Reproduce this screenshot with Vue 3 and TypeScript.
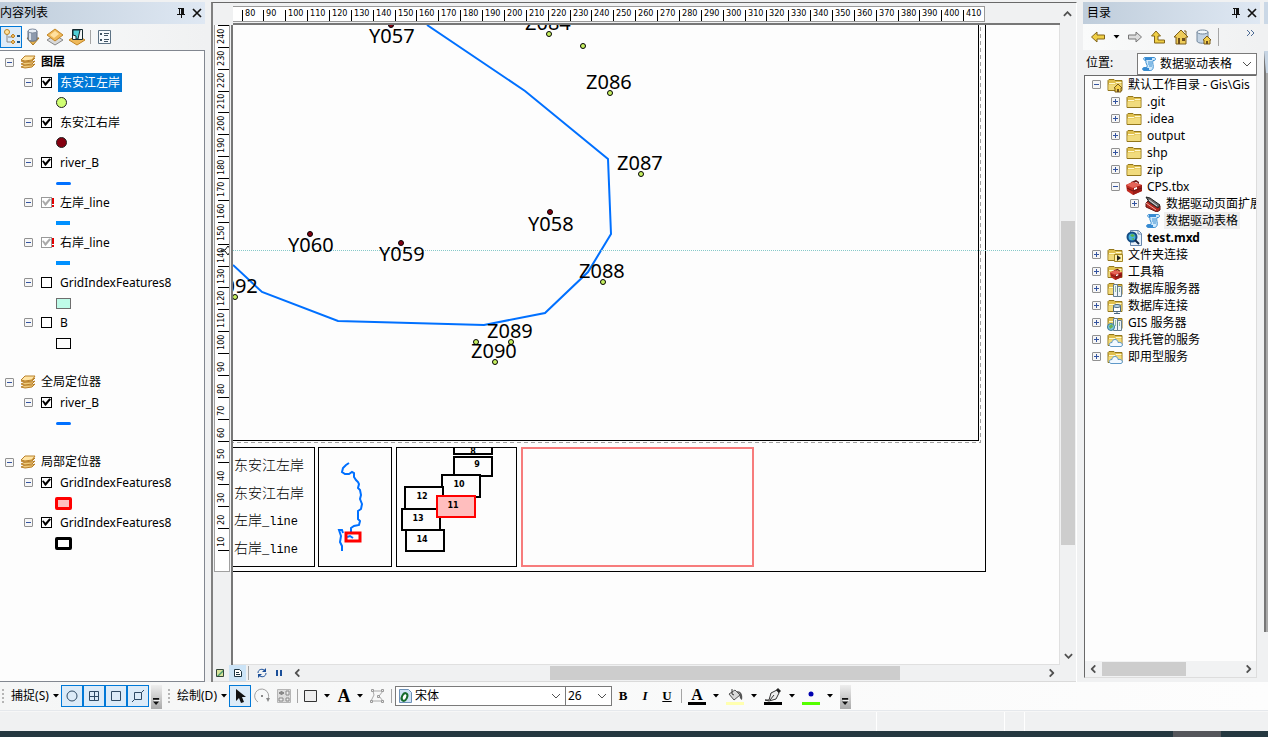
<script setup lang="ts">
import { ref } from 'vue'

interface LayerRow {
  id: string
  kind: 'frame' | 'layer' | 'symbol' | 'blank'
  label?: string
  bold?: boolean
  checked?: boolean
  broken?: boolean
  selected?: boolean
  shape?: 'dot' | 'line' | 'bar' | 'box'
  tone?: string
}

interface CatalogRow {
  label: string
  level: number
  icon: string
  expander?: 'plus' | 'minus'
  bold?: boolean
  selected?: boolean
}

const layers = ref<LayerRow[]>([
  { id: 'f1', kind: 'frame', label: '图层', bold: true },
  { id: 'l1', kind: 'layer', label: '东安江左岸', checked: true, selected: true },
  { id: 's1', kind: 'symbol', shape: 'dot', tone: 'lime' },
  { id: 'l2', kind: 'layer', label: '东安江右岸', checked: true },
  { id: 's2', kind: 'symbol', shape: 'dot', tone: 'maroon' },
  { id: 'l3', kind: 'layer', label: 'river_B', checked: true },
  { id: 's3', kind: 'symbol', shape: 'line' },
  { id: 'l4', kind: 'layer', label: '左岸_line', checked: true, broken: true },
  { id: 's4', kind: 'symbol', shape: 'bar' },
  { id: 'l5', kind: 'layer', label: '右岸_line', checked: true, broken: true },
  { id: 's5', kind: 'symbol', shape: 'bar' },
  { id: 'l6', kind: 'layer', label: 'GridIndexFeatures8', checked: false },
  { id: 's6', kind: 'symbol', shape: 'box', tone: 'mint' },
  { id: 'l7', kind: 'layer', label: 'B', checked: false },
  { id: 's7', kind: 'symbol', shape: 'box', tone: 'plain' },
  { id: 'b1', kind: 'blank' },
  { id: 'f2', kind: 'frame', label: '全局定位器' },
  { id: 'l8', kind: 'layer', label: 'river_B', checked: true },
  { id: 's8', kind: 'symbol', shape: 'line' },
  { id: 'b2', kind: 'blank' },
  { id: 'f3', kind: 'frame', label: '局部定位器' },
  { id: 'l9', kind: 'layer', label: 'GridIndexFeatures8', checked: true },
  { id: 's9', kind: 'symbol', shape: 'box', tone: 'red' },
  { id: 'l10', kind: 'layer', label: 'GridIndexFeatures8', checked: true },
  { id: 's10', kind: 'symbol', shape: 'box', tone: 'black' }
])

const catalog: CatalogRow[] = [
  { label: '默认工作目录 - Gis\\Gis', level: 0, icon: 'folder-home', expander: 'minus' },
  { label: '.git', level: 1, icon: 'folder', expander: 'plus' },
  { label: '.idea', level: 1, icon: 'folder', expander: 'plus' },
  { label: 'output', level: 1, icon: 'folder', expander: 'plus' },
  { label: 'shp', level: 1, icon: 'folder', expander: 'plus' },
  { label: 'zip', level: 1, icon: 'folder', expander: 'plus' },
  { label: 'CPS.tbx', level: 1, icon: 'toolbox', expander: 'minus' },
  { label: '数据驱动页面扩展', level: 2, icon: 'toolset', expander: 'plus' },
  { label: '数据驱动表格', level: 2, icon: 'script', selected: true },
  { label: 'test.mxd', level: 1, icon: 'mxd', bold: true },
  { label: '文件夹连接', level: 0, icon: 'folder-link', expander: 'plus' },
  { label: '工具箱', level: 0, icon: 'folder-tools', expander: 'plus' },
  { label: '数据库服务器', level: 0, icon: 'folder-server', expander: 'plus' },
  { label: '数据库连接', level: 0, icon: 'folder-db', expander: 'plus' },
  { label: 'GIS 服务器', level: 0, icon: 'folder-gis', expander: 'plus' },
  { label: '我托管的服务', level: 0, icon: 'folder-cloud', expander: 'plus' },
  { label: '即用型服务', level: 0, icon: 'folder-cloud', expander: 'plus' }
]

const pitch = 21.87
const topTicks = Array.from({ length: 34 }, (_, i) => ({ at: Math.round(8.5 + i * pitch), value: 80 + i * 10 }))
const sideTicks = Array.from({ length: 25 }, (_, i) => ({ at: Math.round(i * pitch), value: 250 - i * 10 }))

const leftBank = [[549, 34], [583, 46], [610, 93], [641, 174], [603, 282], [235, 297], [476, 342], [511, 342], [495, 362]]
const rightBank = [[391, 25], [550, 212], [310, 234], [401, 243]]
const stations = [
  { t: 'Y057', x: 369, y: 43 }, { t: 'Z084', x: 525, y: 30 }, { t: 'Z086', x: 586, y: 89 },
  { t: 'Z087', x: 617, y: 170 }, { t: 'Y058', x: 528, y: 231 }, { t: 'Y060', x: 288, y: 252 },
  { t: 'Y059', x: 379, y: 261 }, { t: 'Z088', x: 579, y: 278 }, { t: 'Z092', x: 212, y: 293 },
  { t: 'Z089', x: 487, y: 338 }, { t: 'Z090', x: 471, y: 358 }
]
const sheets = [
  { t: '8', x: 454, y: 432, w: 38, h: 22, tx: 473, ty: 454 },
  { t: '9', x: 454, y: 457, w: 38, h: 19, tx: 477, ty: 467 },
  { t: '10', x: 442, y: 475, w: 38, h: 22, tx: 459, ty: 487 },
  { t: '12', x: 405, y: 487, w: 38, h: 22, tx: 422, ty: 499 },
  { t: '13', x: 402, y: 509, w: 38, h: 21, tx: 418, ty: 521 },
  { t: '14', x: 406, y: 530, w: 38, h: 21, tx: 422, ty: 542 },
  { t: '11', x: 437, y: 496, w: 38, h: 21, tx: 453, ty: 508, on: true }
]
const font = ref('宋体')
const size = ref('26')
const place = ref('数据驱动表格')
</script>

<template>
  <div class="app">
    <svg class="defs" aria-hidden="true">
      <symbol id="stack" viewBox="0 0 16 16">
        <g fill="#eec878" stroke="#b98029" stroke-width="1">
          <path d="M1 13l4 1 7-1 3-3-3 1H5z" /><path d="M1 10l4 1 7-1 3-3-3 1H5z" />
          <path d="M1 7l4 1 7-1 3-3-3 1H5z" /><path d="M1 6l4-4 10 0-3 4-7 1z" fill="#ffe4a4" />
        </g>
      </symbol>
      <symbol id="folder" viewBox="0 0 16 16">
        <path d="M1 13.500V3.500l1-1h5l1 1h7v10z" fill="#e0c04e" stroke="#93771c" />
        <path d="M2 6.500h6l1-1h5.500" fill="none" stroke="#fff8d0" />
        <path d="M1.500 12V7.500h7l1-1h5V13h-13z" fill="#f1db7d" />
      </symbol>
      <symbol id="house" viewBox="0 0 16 16">
        <path d="M8 1L1 8h2v7h10V8h2z" fill="#edcb58" stroke="#7a5c1b" />
        <path d="M11 2h2v4" fill="none" stroke="#7a5c1b" /><path d="M5 9h2v6H5zM9 9h3v3H9z" fill="#6c4d1c" />
      </symbol>
      <symbol id="house-small" viewBox="0 0 10 10">
        <path d="M5 1L1 5h1v4h6V5h1z" fill="#f3cf4e" stroke="#7a5c1b" /><path d="M4 6h2v3H4z" fill="#6c4d1c" />
      </symbol>
      <symbol id="folder-home" viewBox="0 0 16 16"><use href="#folder" width="16" height="16" /><use href="#house-small" x="6" y="6" width="10" height="10" /></symbol>
      <symbol id="toolbox" viewBox="0 0 16 16">
        <path d="M5 3l5-2 3 2v3l-1-2-2-1-4 2z" fill="#6c1512" /><path d="M0 6l6-3 10 3v6l-9 4-6-4z" fill="#c02a20" />
        <path d="M0 6l7 3 9-3-9-3z" fill="#e56458" /><path d="M7 9v7l9-4V6z" fill="#9d1c16" /><path d="M8 9l3-1v2l-3 1z" fill="#fff" /><path d="M1 9l6 3 9-3" stroke="#6c1512" fill="none" />
      </symbol>
      <symbol id="toolset" viewBox="0 0 16 16">
        <path d="M1 7l3-3 11 6v4l-3 2L1 11z" fill="#b42a20" stroke="#5d1713" /><path d="M1 1l4 1 10 7-2 3-9-6z" fill="#6b6b6b" stroke="#222" /><path d="M4 4l8 6" stroke="#e0e0e0" stroke-width="1" /><path d="M1 7l10 7" stroke="#f3a89f" />
      </symbol>
      <symbol id="script" viewBox="0 0 16 16">
        <path d="M4 1.500h9c2 0 2 3 0 3h-1c-1 3 1 5 0 8-1 2-2 2-3 2H3c-2 0-2-3 0-3h3c1-3-2-4-1-7-3 0-3-3-1-3z" fill="#cfe9fc" stroke="#3d8fd0" />
        <path d="M4 2h7v2H4z" fill="#3489d4" /><path d="M7 6h4M7 8h4M8 10h3" stroke="#3d8fd0" /><path d="M2 12h6v2H2z" fill="#3489d4" />
      </symbol>
      <symbol id="mxd" viewBox="0 0 16 16">
        <path d="M4.500.500h8l3 3v12h-11z" fill="#e9f1fa" stroke="#6686ad" /><path d="M12 1v3h3" fill="#fff" stroke="#6686ad" />
        <circle cx="6" cy="7" r="4.500" fill="#45b0de" stroke="#154d85" stroke-width="2" /><path d="M4 5l3-1 2 2-3 1zM5 9l3-1v2z" fill="#5fb443" /><path d="M9 10l4 4" stroke="#10294b" stroke-width="2" />
      </symbol>
      <symbol id="folder-link" viewBox="0 0 16 16"><use href="#folder" width="16" height="16" /><path d="M7.500 7.500h8v7h-8z" fill="#fff0a8" stroke="#a38524" /><path d="M10 8l4 3-4 3z" fill="#222" /></symbol>
      <symbol id="folder-tools" viewBox="0 0 16 16"><use href="#folder" width="16" height="16" /><use href="#toolbox" x="3" y="4" width="12" height="12" /></symbol>
      <symbol id="folder-server" viewBox="0 0 16 16"><use href="#folder" width="16" height="16" /><path d="M6.500 3.500h4v12h-4zM10.500 5.500h4v10h-4z" fill="#eef5fa" stroke="#637d91" /><path d="M8 6h1M8 8h1M8 10h1M12 8h1M12 10h1" stroke="#3c8c48" /></symbol>
      <symbol id="folder-db" viewBox="0 0 16 16"><use href="#folder" width="16" height="16" /><path d="M6.500 7.500h7v6h-7z" fill="#fff" stroke="#49677e" /><path d="M10 14v2M7 15.500h6" stroke="#49677e" /><ellipse cx="10" cy="8" rx="3.500" ry="1.500" fill="#bcd8eb" stroke="#49677e" /></symbol>
      <symbol id="folder-gis" viewBox="0 0 16 16"><use href="#folder-server" width="16" height="16" /><circle cx="4" cy="12" r="3.500" fill="#79c6e4" stroke="#3c7b98" /><path d="M2 11l3-2 1 3-3 2z" fill="#69b150" /></symbol>
      <symbol id="folder-cloud" viewBox="0 0 16 16"><use href="#folder" width="16" height="16" /><path d="M4 14.500c-3-1-2-4 1-4 0-4 6-4 6 0 4-1 6 3 3 4z" fill="#f2f9ff" stroke="#5e98c8" /></symbol>
      <symbol id="arrow" viewBox="0 0 16 16"><path d="M1.500 8L7 3v3h7.500v4H7v3z" stroke-linejoin="round" /></symbol>
      <symbol id="caret" viewBox="0 0 6 4"><path d="M0 0h6L3 3.500z" /></symbol>
      <symbol id="chevron" viewBox="0 0 10 6"><path d="M1 1l4 4 4-4" fill="none" stroke="#505050" /></symbol>
      <symbol id="more" viewBox="0 0 8 10"><path d="M0 1h7v2H0zM0 5h7L3.500 9z" fill="#111" /><path d="M1 4h7" stroke="#fff" /></symbol>
      <symbol id="pin" viewBox="0 0 10 10"><path d="M2 0h6v6h1v1H6v3H5V7H1V6h2V1H2zM4 1v5h1V1z" fill="#111" fill-rule="evenodd" /></symbol>
      <symbol id="close" viewBox="0 0 10 10"><path d="M1 1l8 8M9 1L1 9" stroke="#111" stroke-width="1.700" /></symbol>
    </svg>

    <main class="workspace">
      <section class="panel contents">
        <header class="title"><h2>内容列表</h2>
          <button aria-label="自动隐藏"><svg><use href="#pin" /></svg></button>
          <button aria-label="关闭"><svg><use href="#close" /></svg></button>
        </header>
        <nav class="tools">
          <button class="tool active" aria-label="按绘制顺序列出">
            <svg viewBox="0 0 18 18"><path d="M5 6v8h5M6 9h5" fill="none" stroke="#888" /><circle cx="5" cy="4" r="2.500" fill="#ffe3a0" stroke="#bd8425" /><path d="M9 8l2-2 2 2-2 2zM9 14l2-2 2 2-2 2z" fill="#e8b560" stroke="#bd8425" /><path d="M15 8h3M15 14h3" stroke="#16538a" stroke-width="2" /></svg>
          </button>
          <button class="tool" aria-label="按源列出">
            <svg viewBox="0 0 18 18"><path d="M3 10h12l-6 7z" fill="#e9b44f" stroke="#a77723" /><path d="M4 3v8c0 3 9 3 9 0V3z" fill="#8d9aad" stroke="#606d80" /><path d="M6 4v8" stroke="#d8dfe8" stroke-width="2" /><ellipse cx="8.500" cy="3" rx="4.500" ry="2" fill="#e7edf4" stroke="#7c899c" /></svg>
          </button>
          <button class="tool" aria-label="按可见性列出">
            <svg viewBox="0 0 18 18"><path d="M1 12l8-5 8 5-8 5z" fill="#d9d9d9" stroke="#888" /><path d="M1 7l8-6 8 6-8 6z" fill="#efb95a" stroke="#c18526" /><path d="M4 7l5-4 4 3-5 4z" fill="#ffe1a0" /></svg>
          </button>
          <button class="tool" aria-label="按选择列出">
            <svg viewBox="0 0 18 18"><path d="M1 12l8-5 8 5-8 5z" fill="#efb95a" stroke="#c18526" /><path d="M4.500 1.500h10v10h-10z" fill="#f4f6f6" stroke="#14292e" /><path d="M5 2h7l-2 9H8V8L5 7z" fill="#4fd0d8" stroke="#14292e" /></svg>
          </button>
          <i class="rule"></i>
          <button class="tool" aria-label="选项">
            <svg viewBox="0 0 18 18"><path d="M3.500 2.500h12v13h-12z" fill="#f6f9fc" stroke="#5d7284" /><path d="M9 5.500h5M9 7.500h4M9 11.500h5M9 13.500h4" stroke="#3e5263" /><path d="M5 5h2v2H5zM5 11h2v2H5z" fill="#3e5263" /></svg>
          </button>
        </nav>
        <ul class="tree layer-tree">
          <li v-for="row in layers" :key="row.id" :class="['row', row.kind]">
            <template v-if="row.kind === 'frame'">
              <button class="expander" aria-label="折叠"></button>
              <svg class="icon"><use href="#stack" /></svg>
              <span :class="['frame-name', { bold: row.bold }]">{{ row.label }}</span>
            </template>
            <template v-else-if="row.kind === 'layer'">
              <button class="expander" aria-label="折叠"></button>
              <input :id="row.id" v-model="row.checked" type="checkbox" :class="{ broken: row.broken }" />
              <i :class="['alert', { shown: row.broken }]"></i>
              <label :for="row.id" :class="{ selected: row.selected }">{{ row.label }}</label>
            </template>
            <span v-else-if="row.kind === 'symbol'" :class="['mark', row.shape, row.tone]"></span>
          </li>
        </ul>
      </section>

      <section class="view">
        <div class="corner"></div>
        <div class="top-ruler">
          <svg>
            <template v-for="t in topTicks" :key="t.value">
              <rect class="tick" :x="t.at" y="3" width="1" height="11" />
              <text :x="t.at + 3" y="9">{{ t.value }}</text>
            </template>
          </svg>
        </div>
        <button class="scroll-end up" aria-label="向上"><svg><use href="#chevron" /></svg></button>
        <div class="side-ruler">
          <div class="side-scale">
            <svg>
              <template v-for="t in sideTicks" :key="t.value">
                <rect class="tick" x="3" :y="t.at" width="11" height="1" />
                <text v-if="t.value < 250" :transform="`translate(9 ${t.at - 3}) rotate(-90)`">{{ t.value }}</text>
              </template>
              <path d="M6 225h4l3-4 3 4-3 5-3-4H6z" fill="#fff" stroke="#111" />
            </svg>
          </div>
        </div>
        <div class="map">
          <svg>
            <g transform="translate(-233 -25)" shape-rendering="crispEdges">
              <g fill="none" stroke="#000">
                <path d="M230 440.500h748.500V20" /><path d="M230 571.500h755.500V20" />
                <path d="M230 442.500h750.500V20" stroke="#a0a0a0" stroke-dasharray="4 3" />
                <path d="M230 447.500h84.500v119h-84.500M318.500 447.500h73v119h-73zM396.500 447.500h120v119h-120z" />
              </g>
              <rect x="522" y="448" width="231" height="118" fill="none" stroke="#f77c7c" stroke-width="2" />
            </g>
            <g transform="translate(-233 -25)">
              <polyline class="river" points="233,265 262,292 338,321 484,325 545,313 588,272 611,234 608,159 525,91 427,25" />
              <circle v-for="p in leftBank" :key="p.join()" class="pt left" :cx="p[0]" :cy="p[1]" r="2.500" />
              <circle v-for="p in rightBank" :key="p.join()" class="pt right" :cx="p[0]" :cy="p[1]" r="2.500" />
              <path d="M233 250.500H1062" stroke="#86c9c9" stroke-dasharray="1 1" shape-rendering="crispEdges" />
              <text v-for="s in stations" :key="s.t" class="station" :x="s.x" :y="s.y">{{ s.t }}</text>
              <g class="legend">
                <text x="234" y="470">东安江左岸</text><text x="234" y="498">东安江右岸</text>
                <text x="234" y="525">左岸<tspan>_line</tspan></text><text x="234" y="553">右岸<tspan>_line</tspan></text>
              </g>
              <polyline class="river" points="349,463 346,465 343,468 342,472 345,474 349,474 352,472 354,473 354,477 356,480 358,482 359,484 358,488 360,490 361,495 360,499 362,504 361,509 358,511 358,519 360,521 359,525 354,526 351,528 351,532" />
              <polyline class="river" points="343,533 342,530 339,530 340,533 341,536 340,542 342,546 342,551" />
              <path class="river" d="M347 537l3-1 3 2" />
              <rect x="346" y="533" width="14" height="8" fill="none" stroke="red" stroke-width="3" />
              <svg x="397" y="448" width="119" height="118" viewBox="397 448 119 118">
                <g v-for="s in sheets" :key="s.t" :class="['sheet', { on: s.on }]">
                  <rect :x="s.x" :y="s.y" :width="s.w" :height="s.h" /><text :x="s.tx" :y="s.ty">{{ s.t }}</text>
                </g>
              </svg>
            </g>
          </svg>
        </div>
        <div class="vscroll"><i></i><button class="scroll-end down" aria-label="向下"><svg><use href="#chevron" /></svg></button></div>
        <footer class="view-bar">
          <button aria-label="数据视图"><svg viewBox="0 0 10 10"><path d="M1.500 1.500h7v7h-7z" fill="#d7e39a" stroke="#344638" /><path d="M2 8l6-6v2L4 8z" fill="#4a9a6d" /></svg></button>
          <button class="on" aria-label="布局视图"><svg viewBox="0 0 10 10"><path d="M1.500 1.500h5l2 2v5h-7z" fill="#fff" stroke="#1c3340" /><path d="M3 4.500h3M3 6.500h4" stroke="#1c3340" /></svg></button>
          <i class="rule"></i>
          <button aria-label="刷新"><svg viewBox="0 0 10 10"><path d="M1 5c0-4 5-5 7-2M9 5c0 4-5 5-7 2" fill="none" stroke="#1b4f99" /><path d="M9 0v4H5zM1 10V6h4z" fill="#1b4f99" /></svg></button>
          <button class="pause" aria-label="暂停"><svg viewBox="0 0 10 10"><path d="M2 2h2v6H2zM6 2h2v6H6z" fill="#1b4f99" /></svg></button>
          <button class="scroll-end prev" aria-label="向左"><svg><use href="#chevron" /></svg></button>
          <span class="track"><i></i></span>
          <button class="scroll-end next" aria-label="向右"><svg><use href="#chevron" /></svg></button>
        </footer>
      </section>

      <section class="panel catalog">
        <header class="title"><h2>目录</h2>
          <button aria-label="自动隐藏"><svg><use href="#pin" /></svg></button>
          <button aria-label="关闭"><svg><use href="#close" /></svg></button>
        </header>
        <nav class="tools">
          <button class="gold" aria-label="后退"><svg><use href="#arrow" /></svg></button>
          <svg class="caret"><use href="#caret" /></svg>
          <button class="gray" aria-label="前进"><svg class="flip"><use href="#arrow" /></svg></button>
          <button class="gold" aria-label="上一级"><svg viewBox="0 0 16 16"><path d="M1.500 7L6 2l4.500 5H8v4h6.500v3H4.500V7z" /></svg></button>
          <button aria-label="主目录"><svg><use href="#house" /></svg></button>
          <button aria-label="默认地理数据库"><svg viewBox="0 0 16 16"><path d="M1 3v9c0 3 11 3 11 0V3z" fill="#c3d3e3" stroke="#72879c" /><ellipse cx="6.500" cy="3" rx="5.500" ry="2" fill="#f2f7fb" stroke="#72879c" /><use href="#house-small" x="6" y="6" width="10" height="10" /></svg></button>
          <i class="rule"></i>
          <button class="extra" aria-label="更多"><svg viewBox="0 0 10 8"><path d="M1 1l3 3-3 3M5 1l3 3-3 3" fill="none" stroke="#4d6b95" /></svg></button>
        </nav>
        <div class="location">
          <label for="place">位置:</label>
          <span class="combo"><svg class="icon"><use href="#script" /></svg>
            <select id="place" v-model="place"><option>数据驱动表格</option></select><svg class="chev"><use href="#chevron" /></svg></span>
        </div>
        <div class="tree catalog-tree">
          <ul>
            <li v-for="row in catalog" :key="row.label" :class="['item', 'level' + row.level]">
              <button v-if="row.expander" :class="['expander', row.expander]" aria-label="展开或折叠"></button>
              <i v-else class="no-expander"></i>
              <svg class="icon"><use :href="'#' + row.icon" /></svg>
              <span :class="{ bold: row.bold, picked: row.selected }">{{ row.label }}</span>
            </li>
          </ul>
          <div class="hscroll">
            <button class="scroll-end prev" aria-label="向左"><svg><use href="#chevron" /></svg></button>
            <span class="track"><i></i></span>
            <button class="scroll-end next" aria-label="向右"><svg><use href="#chevron" /></svg></button>
          </div>
        </div>
      </section>
      <aside class="dock"><i class="dock-title"></i><i class="dock-body"></i></aside>
    </main>

    <div class="toolbar">
      <i class="grip"></i>
      <button class="menu snap">捕捉(S)<svg class="caret"><use href="#caret" /></svg></button>
      <div class="snaps">
        <button aria-label="点捕捉"><svg viewBox="0 0 14 14"><circle cx="7" cy="7" r="5" /></svg></button>
        <button aria-label="端点捕捉"><svg viewBox="0 0 14 14"><path d="M2.500 2.500h9v9h-9zM7.500 3v8M3 7.500h8" /></svg></button>
        <button aria-label="折点捕捉"><svg viewBox="0 0 14 14"><path d="M2.500 2.500h9v9h-9z" /></svg></button>
        <button aria-label="边捕捉"><svg viewBox="0 0 14 14"><path d="M3.500 3.500h7v7h-7zM1 13l2.500-2.500M10.500 3.500L13 1" /></svg></button>
      </div>
      <button class="overflow" aria-label="工具条选项"><svg><use href="#more" /></svg></button>
      <i class="grip"></i>
      <button class="menu draw">绘制(D)<svg class="caret"><use href="#caret" /></svg></button>
      <button class="cell active" aria-label="选择元素"><svg viewBox="0 0 16 16"><path d="M4 1v12l3-3 2 5 3-1-2-5h4z" fill="#111" /></svg></button>
      <button class="cell" aria-label="旋转"><svg viewBox="0 0 16 16"><path d="M4 14A7 7 0 1 1 14 11" fill="none" stroke="#a0a0a0" /><path d="M7 7h2v2H7zM12 10h4l-2 4z" fill="#888" /></svg></button>
      <button class="cell" aria-label="缩放至元素"><svg viewBox="0 0 16 16"><path d="M1.500 1.500h13v13h-13z" fill="#ddd" stroke="#b5b5b5" /><path d="M3 5h5M5.500 3v4" stroke="#888" stroke-width="2" /><path d="M10 3h3v4h-3zM3 10h4v3H3zM10 10h3v3h-3z" fill="#eee" stroke="#888" /></svg></button>
      <i class="rule first"></i>
      <button class="cell" aria-label="矩形"><svg viewBox="0 0 16 16"><path d="M1.500 2.500h12v11h-12z" fill="#eee" stroke="#333" /></svg></button>
      <svg class="caret"><use href="#caret" /></svg>
      <button class="cell glyph big" aria-label="文本">A</button>
      <svg class="caret"><use href="#caret" /></svg>
      <button class="cell" aria-label="编辑折点"><svg viewBox="0 0 16 16"><path d="M2 13l3-6-1-4h10l-4 5 4 5z" fill="none" stroke="#aaa" /><path d="M2.500 1.500h2v2h-2zM12.500 1.500h2v2h-2zM8.500 7.500h2v2h-2zM1.500 12.500h2v2h-2zM12.500 12.500h2v2h-2z" fill="#eee" stroke="#999" /></svg></button>
      <i class="rule"></i>
      <span class="combo font"><svg class="icon" viewBox="0 0 16 16"><path d="M2.500 1.500h9l3 3v10h-12z" fill="#cfe2f5" stroke="#6c91b7" /><ellipse cx="7.500" cy="9" rx="2.500" ry="4" transform="rotate(25 7.500 9)" fill="#fff" stroke="#176b2c" stroke-width="2" /></svg>
        <select v-model="font" aria-label="字体"><option>宋体</option></select><svg class="chev"><use href="#chevron" /></svg></span>
      <span class="combo size"><select v-model="size" aria-label="字号"><option>26</option></select><svg class="chev"><use href="#chevron" /></svg></span>
      <div class="styles">
        <button class="cell glyph" aria-label="加粗">B</button>
        <button class="cell glyph italic" aria-label="倾斜">I</button>
        <button class="cell glyph underline" aria-label="下划线">U</button>
      </div>
      <i class="rule"></i>
      <div class="swatches">
        <button class="ink black glyph" aria-label="字体颜色">A</button><svg class="caret"><use href="#caret" /></svg>
        <button class="ink cream" aria-label="填充颜色"><svg viewBox="0 0 16 14"><path d="M2 6l6-4 5 5-6 5z" fill="#d9d9d9" stroke="#555" /><path d="M5 1v5l2 1" fill="none" stroke="#333" /><path d="M9 3c5 0 7 3 6 9-2-1-3-3-2-6z" fill="#555" /></svg></button><svg class="caret"><use href="#caret" /></svg>
        <button class="ink black" aria-label="线颜色"><svg viewBox="0 0 16 14"><path d="M0 12h4l2-7 6-3 2 3-3 6-7 2zM5 12l4-5" fill="#eee" stroke="#333" /><path d="M11 2l2-2 3 3-2 2z" fill="#222" /></svg></button><svg class="caret"><use href="#caret" /></svg>
        <button class="ink green" aria-label="标记颜色"><svg viewBox="0 0 16 14"><circle cx="8" cy="6" r="2.500" fill="#0000b0" /></svg></button><svg class="caret"><use href="#caret" /></svg>
      </div>
      <button class="overflow last" aria-label="工具条选项"><svg><use href="#more" /></svg></button>
    </div>
    <footer class="status"><i></i><i></i><i></i></footer>
    <div class="taskbar"><i></i></div>
  </div>
</template>

<style>
html, body { margin: 0; height: 100%; }
</style>

<style scoped>
.app { display: flex; flex-direction: column; height: 100vh; min-height: 600px; overflow: hidden; background: #f0f1f2; color: #000; font: 12px/16px "Noto Sans", "Noto Sans CJK SC", sans-serif; }
.app * { box-sizing: border-box; }
.defs { position: absolute; width: 0; height: 0; }
svg { display: block; flex: none; }
button { display: flex; align-items: center; justify-content: center; padding: 0; border: 0; background: none; color: inherit; font: inherit; }
ul { margin: 0; padding: 0; list-style: none; }
.workspace { flex: 1; min-height: 0; display: flex; padding-top: 2px; }
.panel { display: flex; flex-direction: column; flex: none; min-height: 0; }
.contents { width: 205px; margin-right: 6px; }
.title { display: flex; align-items: center; height: 22px; flex: none; background: linear-gradient(90deg, #bfcddb, #dfe8f3); }
.title h2 { flex: 1; margin: 0; font-size: 12px; line-height: 22px; font-weight: 400; }
.title button { width: 16px; height: 16px; }
.title svg { width: 10px; height: 10px; }
.tools { display: flex; align-items: center; height: 26px; flex: none; background: linear-gradient(90deg, #fafbfb, #f0f1f2); }
.tool { width: 22px; height: 22px; border: 1px solid transparent; }
.tool svg { width: 18px; height: 18px; }
.active { border: 1px solid #0078d7; background: #dcebf8; }
.rule { width: 1px; height: 14px; flex: none; background: #a5a5a5; }
.contents .rule { margin: 0 2px 0 2px; }
.tree { flex: 1; min-height: 0; overflow: hidden; background: #fdfdfd; border: 1px solid #828790; }
.layer-tree { border-left: 0; padding-top: 1px; }
.row { display: flex; align-items: center; height: 20px; padding-left: 5px; white-space: nowrap; }
.layer { padding-left: 24px; }
.symbol { padding-left: 56px; }
.expander { position: relative; width: 9px; height: 9px; flex: none; border: 1px solid #919191; border-radius: 1px; background: #f6f6f6; }
.expander::before { content: ""; width: 5px; height: 1px; background: #3454a0; }
.expander.plus::after { content: ""; position: absolute; left: 3px; top: 1px; width: 1px; height: 5px; background: #3454a0; }
.icon { width: 16px; height: 16px; }
.frame .icon { margin: 0 5px 0 6px; }
.bold { font-weight: 700; }
input { appearance: none; display: grid; place-items: center; width: 11px; height: 11px; flex: none; margin: 0 0 0 8px; border: 1px solid #000; background: #fff; }
input:checked::before { content: ""; width: 9px; height: 8px; background: #000; clip-path: polygon(0 38%, 18% 32%, 38% 58%, 82% 4%, 100% 18%, 40% 100%, 30% 90%); }
.broken { border-color: #999; }
input.broken:checked::before { background: #aaa; }
.alert { width: 2px; height: 9px; margin-right: 4px; }
.alert.shown { background: linear-gradient(#e00000 70%, #fff 70%, #fff 80%, #e00000 80%); }
.row label { padding: 0 2px; line-height: 19px; }
.row label.selected { background: #0078d7; color: #fff; }
.mark { display: block; }
.dot { width: 11px; height: 11px; border: 1px solid #222; border-radius: 50%; }
.lime { background: #d1ff73; }
.maroon { background: #850010; }
.line { width: 15px; height: 3px; margin-top: 3px; border-radius: 2px; background: #0070ff; }
.bar { width: 14px; height: 4px; margin-top: 2px; background: #0090ff; }
.box { width: 15px; height: 11px; margin-top: 2px; border: 1px solid #000; }
.mint { border-color: #6e6e6e; background: #befbe8; }
.red, .box.black { width: 17px; height: 13px; margin-left: -1px; border: 3px solid #f00; border-radius: 2px; background: #ffbebe; }
.box.black { border-color: #000; background: #fff; }

.view { flex: 1; min-width: 0; display: grid; grid-template: 22px 1fr 17px / 20px 1fr 16px; border-left: 2px solid #808080; border-top: 1px solid #696969; border-right: 1px solid #fff; margin-right: 6px; }
.top-ruler { overflow: hidden; padding-top: 3px; border-bottom: 2px solid #777; }
.top-ruler svg { width: 752px; max-width: 100%; height: 16px; border: 1px solid #9a9a9a; border-left: 0; background: #fff; }
.tick { fill: #000; }
.top-ruler text, .side-ruler text { font: 9px "DejaVu Sans Condensed", "DejaVu Sans", sans-serif; }
.side-ruler { overflow: hidden; border-right: 2px solid #777; }
.side-scale { width: 16px; height: 547px; margin-left: 1px; border: 1px solid #a0a0a0; border-top: 0; background: #fff; overflow: hidden; }
.side-scale svg { width: 16px; height: 100%; }
.map { min-width: 0; min-height: 0; overflow: hidden; background: #fdfdfd; border-right: 1px solid #e0e0e0; border-bottom: 1px solid #e0e0e0; }
.map > svg { width: 100%; height: 100%; }
.river { fill: none; stroke: #0070ff; stroke-width: 2; }
.pt { stroke: #000; }
.pt.left { fill: #c6f060; }
.pt.right { fill: #850010; }
.station { font-size: 20px; }
.legend { font: 14px "Noto Sans CJK SC", sans-serif; font-weight: 300; }
.legend tspan { font: 12px "Liberation Mono", monospace; }
.sheet rect { fill: #fdfdfd; stroke: #000; stroke-width: 2; }
.sheet.on rect { fill: #ffbebe; stroke: #f00; }
.sheet text { font: bold 8px "DejaVu Sans", sans-serif; text-anchor: middle; }
.scroll-end { width: 14px; height: 14px; flex: none; stroke-width: 2; }
.scroll-end svg { width: 9px; height: 6px; overflow: visible; }
.up { align-self: center; }
.up svg { transform: rotate(180deg); }
.prev svg { transform: rotate(90deg); }
.next svg { transform: rotate(-90deg); }
.vscroll { display: flex; flex-direction: column; min-height: 0; padding-left: 1px; }
.vscroll::before { content: ""; flex: 196; }
.vscroll i { flex: 324; background: #cdcdcd; width: 14px; }
.vscroll .down { margin-top: 104px; margin-bottom: 2px; }
.view-bar { grid-column: 1 / -1; display: flex; align-items: center; border-bottom: 1px solid #dadada; }
.view-bar button { width: 14px; height: 16px; flex: none; }
.view-bar button > svg { width: 10px; height: 10px; }
.view-bar .on { width: 17px; margin-left: 2px; background: #cce4f7; }
.view-bar .rule { margin: 0 6px 0 2px; }
.view-bar .pause { margin-left: 3px; }
.view-bar .scroll-end svg { width: 9px; height: 6px; }
.view-bar .prev { margin-left: 4px; }
.track { flex: 1; height: 14px; display: flex; }
.track::before { content: ""; flex: 246; }
.track i { flex: 350; background: #cdcdcd; }
.track::after { content: ""; flex: 144; }
.view-bar .next { margin-right: 18px; }

.catalog { width: 177px; }
.catalog .title { padding-left: 4px; }
.catalog .tools { padding-left: 7px; }
.catalog .tools svg { width: 16px; height: 16px; }
.catalog .tools button { margin-right: 7px; }
.catalog .tools .caret { width: 7px; height: 4px; margin: 0 7px 0 0; }
.gold svg { fill: #f0cf45; stroke: #826419; }
.gray svg { fill: #ddd; stroke: #777; }
.flip { transform: scaleX(-1); }
.catalog .rule { height: 18px; margin-left: -1px; }
.catalog .tools .extra { margin: 0 4px 8px auto; }
.catalog .tools .extra svg { width: 10px; height: 8px; }
.location { display: flex; align-items: center; justify-content: space-between; height: 25px; padding: 0 3px; flex: none; }
.combo { display: flex; align-items: center; height: 22px; padding: 0 4px 0 3px; border: 1px solid #7a7a7a; background: #fff; }
.combo select { appearance: none; flex: 1; min-width: 0; height: 18px; padding: 0 0 0 3px; border: 0; outline: 0; background: none; color: #000; font: inherit; }
.chev { width: 10px; height: 6px; }
.location .combo { width: 120px; margin-top: 2px; }
.catalog-tree { display: flex; flex-direction: column; margin: 0 3px 4px 1px; border-color: #696969 #ddd #ddd #696969; }
.catalog-tree ul { flex: 1; min-height: 0; overflow: hidden; }
.item { display: flex; align-items: center; height: 17px; padding-left: 7px; white-space: nowrap; }
.item.level1 { padding-left: 26px; }
.item.level2 { padding-left: 45px; }
.item .icon { margin: 0 3px 0 6px; }
.item span { padding: 0 2px; line-height: 17px; }
.no-expander { width: 9px; flex: none; }
.picked { background: #efefef; }
.hscroll { display: flex; align-items: center; height: 16px; flex: none; background: #f1f2f3; padding: 0 1px; }
.hscroll .track::before { content: none; }
.hscroll .track i { flex: 83; margin-left: 2px; }
.hscroll .track::after { flex: 54; }
.dock { display: flex; flex-direction: column; width: 4px; margin-left: 4px; flex: none; }
.dock-title { height: 22px; background: #cbd8e6; }
.dock-body { flex: 1; margin: 27px 0 50px; border-left: 2px solid #777; border-top: 22px solid #c7d5e4; background: #a9a9a9; }

.toolbar { display: flex; align-items: center; height: 29px; flex: none; background: linear-gradient(90deg, #f5f6f6, #fdfdfd); border-bottom: 1px solid #e5e8ec; white-space: nowrap; }
.grip { width: 2px; height: 14px; flex: none; margin: 0 7px 0 2px; background: repeating-linear-gradient(#b5b5b5 0 2px, transparent 2px 4px); }
.menu { gap: 4px; flex: none; }
.caret { width: 6px; height: 4px; }
.snap { width: 50px; padding-right: 2px; }
.snaps { display: flex; }
.snaps button { width: 22px; height: 22px; border: 1px solid #0078d7; background: #dcebf8; }
.snaps svg { width: 14px; height: 14px; fill: none; stroke: #2f4a64; }
.overflow { align-self: end; align-items: end; width: 11px; height: 24px; flex: none; margin: 0 4px 1px 2px; padding-bottom: 3px; background: linear-gradient(#eee, #aaa); }
.overflow.last { margin-left: 0; }
.overflow svg { width: 7px; height: 9px; }
.draw { width: 52px; padding-right: 2px; }
.cell { width: 22px; height: 22px; flex: none; }
.cell svg { width: 16px; height: 16px; }
.toolbar > .rule { margin: 0 3px; }
.toolbar > .rule.first { margin: 0 2px; }
.toolbar > .caret { margin: 0 3px 0 2px; }
.glyph { font: bold 13px "Liberation Serif", serif; }
.big { font-size: 18px; }
.italic { font-style: italic; }
.underline { text-decoration: underline; }
.toolbar .combo { height: 20px; }
.toolbar .font { width: 171px; padding-left: 1px; }
.toolbar .font select { padding-left: 2px; }
.toolbar .size { width: 46px; border-left: 0; padding-left: 0; }
.toolbar .size select { padding-left: 2px; }
.styles { display: flex; }
.swatches { display: flex; align-items: center; margin-left: 3px; }
.swatches .caret { margin: 0 7px; }
.ink { width: 18px; height: 18px; border-bottom: 3px solid; flex: none; }
.ink.glyph { font-size: 16px; line-height: 14px; }
.ink svg { width: 16px; height: 14px; }
.ink.black { border-color: #000; }
.ink.cream { border-color: #ffffb0; }
.ink.green { border-color: #5f0; }
.status { display: flex; height: 20px; flex: none; justify-content: flex-end; border-top: 1px solid #f7f7f7; }
.status i { border-left: 1px solid #fff; }
.status i:nth-child(1) { width: 128px; }
.status i:nth-child(2) { width: 20px; }
.status i:nth-child(3) { width: 244px; }
.taskbar { height: 6px; flex: none; background: #253840; display: flex; justify-content: flex-end; }
.taskbar i { width: 48px; margin-right: 47px; background: #55565b; }
</style>
